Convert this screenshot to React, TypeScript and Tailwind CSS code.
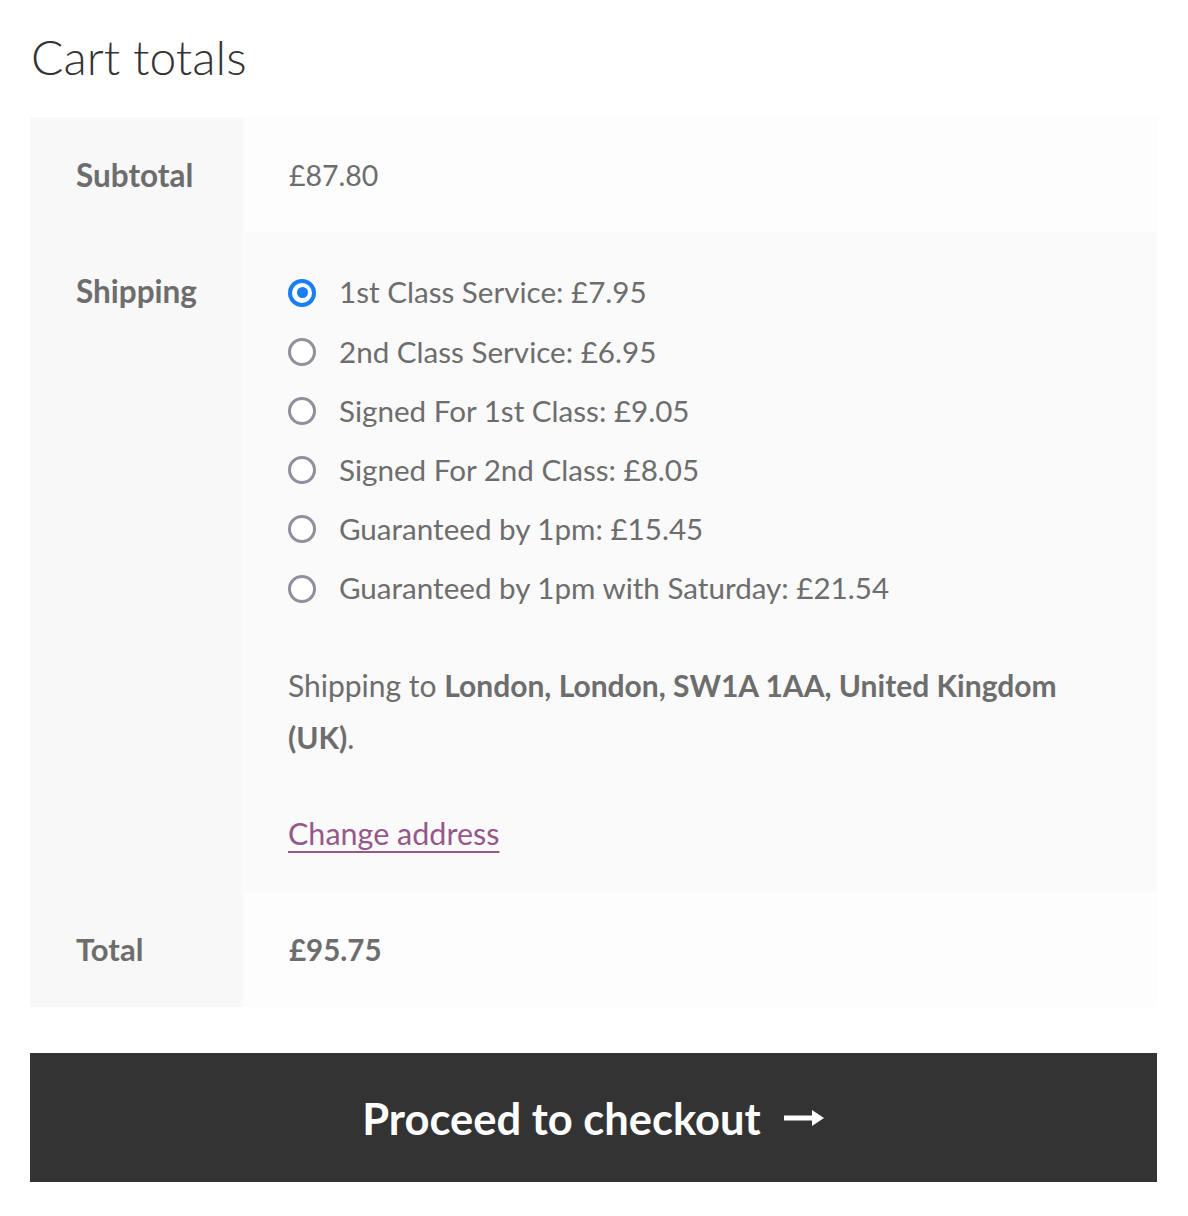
import React from "react";

const options = [
  { label: "1st Class Service: £7.95", checked: true },
  { label: "2nd Class Service: £6.95" },
  { label: "Signed For 1st Class: £9.05" },
  { label: "Signed For 2nd Class: £8.05" },
  { label: "Guaranteed by 1pm: £15.45" },
  { label: "Guaranteed by 1pm with Saturday: £21.54" },
];

function Radio({ checked }: { checked?: boolean }) {
  if (checked) {
    return (
      <span className="flex h-[28px] w-[28px] shrink-0 items-center justify-center rounded-full border-[4px] border-[#1a7ef5] bg-white">
        <span className="h-[11px] w-[11px] rounded-full bg-[#1a7ef5]" />
      </span>
    );
  }
  return <span className="h-[28px] w-[28px] shrink-0 rounded-full border-[3px] border-[#8f8f9d] bg-white" />;
}

export default function App() {
  return (
    <div className="min-h-[1216px] w-[1188px] bg-white font-['Lato',sans-serif] text-[#6d6d6d]">
      <div className="px-[30px] pt-[21px]">
        <h2 className="pl-[1px] text-[48px] font-light leading-[72px] text-[#333333]">Cart totals</h2>
        <div className="mt-[24px] w-[1127px]">
          <div className="flex h-[115px]">
            <div className="flex w-[213px] shrink-0 items-center bg-[#f8f8f8] pl-[46px] pt-[2px] text-[31.5px] font-bold">Subtotal</div>
            <div className="flex flex-1 items-center bg-[#fdfdfd] pl-[46px] pt-[2px] text-[28.5px]">£87.80</div>
          </div>
          <div className="flex">
            <div className="w-[213px] shrink-0 bg-[#f8f8f8] pl-[46px] pt-[33px] text-[31.5px] font-bold leading-[52px]">Shipping</div>
            <div className="flex-1 bg-[#fafafa] pb-[32px] pl-[45px] pt-[31px] text-[29.6px]">
              <ul>
                {options.map((o) => (
                  <li key={o.label} className="flex h-[59.2px] items-center gap-[23px]">
                    <Radio checked={o.checked} />
                    <span>{o.label}</span>
                  </li>
                ))}
              </ul>
              <p className="mt-[41px] pr-[60px] text-[30px] leading-[52px]">
                Shipping to <strong className="font-bold">London, London, SW1A 1AA, United Kingdom</strong>{" "}
                <strong className="font-bold">(UK)</strong>.
              </p>
              <p className="mt-[44px] text-[30.5px] leading-[52px]">
                <a href="#" className="text-[#96588a] underline decoration-[2px] underline-offset-[6px]">Change address</a>
              </p>
            </div>
          </div>
          <div className="flex h-[116px]">
            <div className="flex w-[213px] shrink-0 items-center bg-[#f8f8f8] pl-[46px] pt-[1px] text-[31px] font-bold">Total</div>
            <div className="flex flex-1 items-center bg-[#fdfdfd] pl-[46px] pt-[1px] text-[29.5px] font-bold">£95.75</div>
          </div>
        </div>
        <button className="mt-[46px] flex h-[129px] w-[1127px] items-center justify-center gap-[23px] bg-[#333333] pt-[1px] text-[43.5px] font-bold text-white">
          <span>Proceed to checkout</span>
          <svg width="41" height="16" viewBox="0 0 41 16" fill="white">
            <rect x="0" y="5.5" width="30" height="5" />
            <path d="M28 0 L40 8 L28 16 Z" />
          </svg>
        </button>
      </div>
    </div>
  );
}
